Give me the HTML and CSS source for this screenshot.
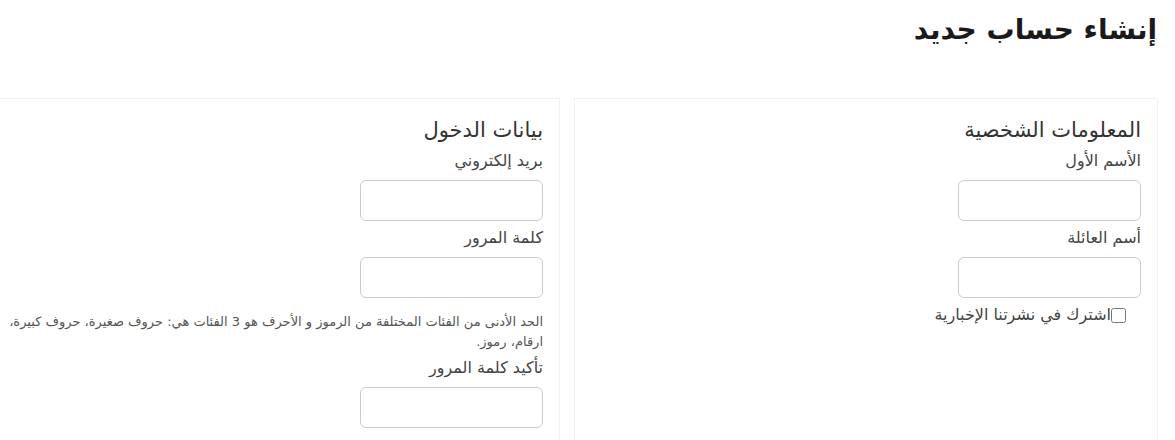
FILE: index.html
```html
<!DOCTYPE html>
<html lang="ar" dir="rtl">
<head>
    <meta charset="UTF-8">
    <meta name="viewport" content="width=device-width, initial-scale=1.0">
    <title>إنشاء حساب جديد</title>
    <link rel="stylesheet" href="styles.css">
</head>
<body>
    <h1 class="page-title">إنشاء حساب جديد</h1>

    <form class="register" autocomplete="off" onsubmit="event.preventDefault();">
        <div class="card">
            <h2>المعلومات الشخصية</h2>
            <div class="field">
                <label for="first">الأسم الأول</label>
                <input type="text" id="first" name="first">
            </div>
            <div class="field">
                <label for="last">أسم العائلة</label>
                <input type="text" id="last" name="last">
            </div>
            <label class="check">
                <input type="checkbox" name="news"><span>اشترك في نشرتنا الإخبارية</span>
            </label>
        </div>

        <div class="card">
            <h2>بيانات الدخول</h2>
            <div class="field">
                <label for="email">بريد إلكتروني</label>
                <input type="email" id="email" name="email">
            </div>
            <div class="field">
                <label for="pass">كلمة المرور</label>
                <input type="password" id="pass" name="pass">
            </div>
            <p class="help">الحد الأدنى من الفئات المختلفة من الرموز و الأحرف هو 3 الفئات هي: حروف صغيرة، حروف كبيرة، ارقام، رموز.</p>
            <div class="field">
                <label for="pass2">تأكيد كلمة المرور</label>
                <input type="password" id="pass2" name="pass2">
            </div>
        </div>
    </form>
</body>
</html>
```

FILE: styles.css
```css
body{
    margin: 0;
    direction: rtl;
    font-family: "DejaVu Sans", "Noto Sans", sans-serif;
    color: #333;
    background: #fff;
    overflow: hidden;
}

.page-title{
    margin: 0;
    padding: 10px 18px 0;
    font-size: 28px;
    line-height: 40px;
    font-weight: bold;
    color: #1a1a1a;
}

.register{
    display: flex;
    gap: 14px;
    padding-right: 17px;
    margin-top: 48px;
}

.card{
    flex: none;
    width: 550px;
    min-height: 323px;
    padding: 18px 16px 0;
    border: 1px solid #f1f1f1;
    border-bottom: none;
}

.card h2{
    margin: 0 0 7px;
    font-size: 21px;
    line-height: 26px;
    font-weight: normal;
    color: #333;
}

.field label{
    display: block;
    font-size: 16px;
    line-height: 22px;
    color: #444;
    margin-bottom: 8px;
}

.field input{
    display: block;
    box-sizing: border-box;
    width: 183px;
    height: 41px;
    margin-bottom: 6px;
    border: 1px solid #ccc;
    border-radius: 6px;
}

.field:last-child input{
    margin-bottom: 0;
}

.check{
    display: flex;
    align-items: center;
    font-size: 16px;
    line-height: 22px;
    color: #444;
}

.check input{
    margin: 0 15px 0 0;
    width: 15px;
    height: 15px;
}

.help{
    margin: 14px 0 5px;
    font-size: 13px;
    line-height: 20px;
    color: #555;
}
```
